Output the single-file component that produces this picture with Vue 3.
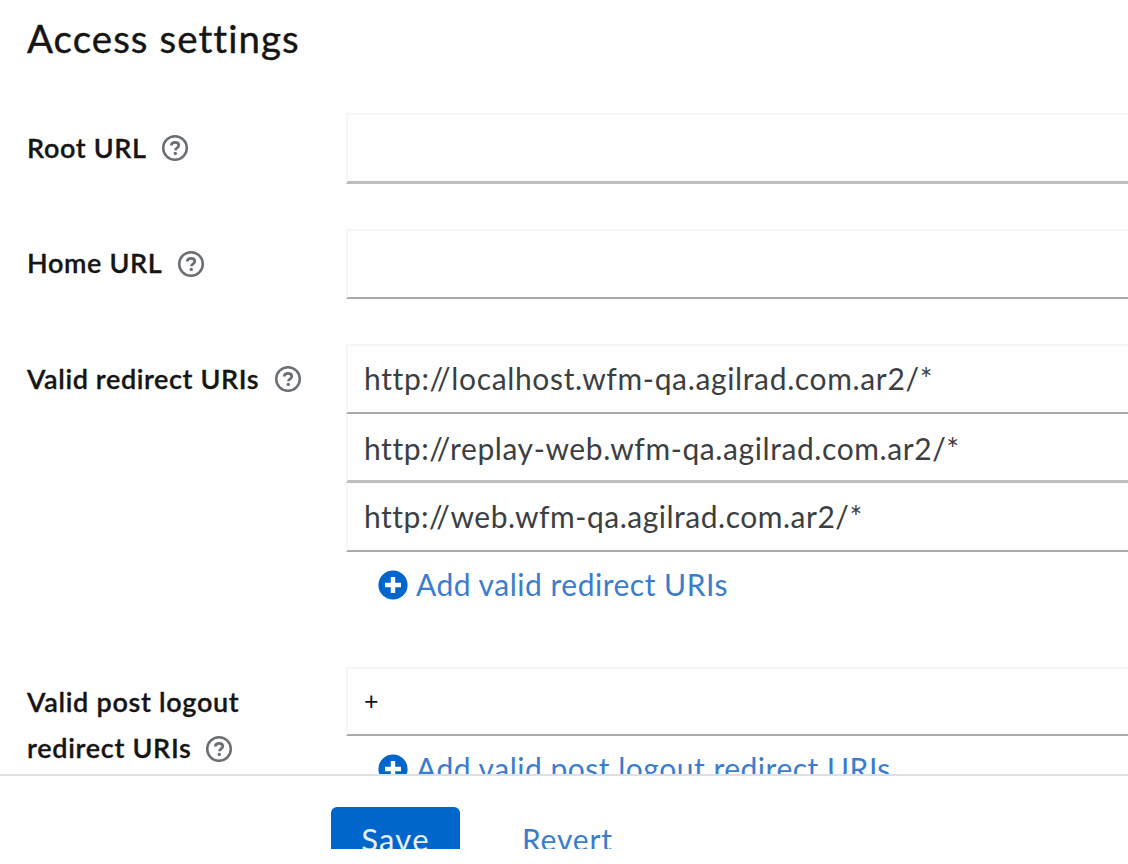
<script setup>
const fields = [
  { id: 'root', lines: ['Root URL'], values: [''] },
  { id: 'home', lines: ['Home URL'], values: [''] },
  {
    id: 'redirect',
    lines: ['Valid redirect URIs'],
    values: [
      'http://localhost.wfm-qa.agilrad.com.ar2/*',
      'http://replay-web.wfm-qa.agilrad.com.ar2/*',
      'http://web.wfm-qa.agilrad.com.ar2/*',
    ],
    add: 'Add valid redirect URIs',
  },
  {
    id: 'logout',
    lines: ['Valid post logout', 'redirect URIs'],
    values: ['+'],
    add: 'Add valid post logout redirect URIs',
  },
]
</script>

<template>
  <main class="page">
    <section class="form">
      <h1 class="title">Access settings</h1>
      <div v-for="f in fields" :key="f.id" class="field" :class="f.id">
        <div class="label">
          <div v-for="(line, i) in f.lines" :key="line" class="line">
            <span class="text">{{ line }}</span>
            <svg v-if="i === f.lines.length - 1" class="help" viewBox="0 0 28 28">
              <circle cx="14" cy="14" r="11.8" fill="none" stroke="#6a6e73" stroke-width="2.5" />
              <path d="M10.1 11.5C10.6 9.3 12 8.4 14 8.4c2.2 0 3.8 1.2 3.8 3.1 0 2.4-3.4 2.5-3.4 4.8" fill="none" stroke="#6a6e73" stroke-width="2.7" />
              <circle cx="14.3" cy="19.4" r="1.7" fill="#6a6e73" />
            </svg>
          </div>
        </div>
        <div class="control">
          <div v-for="(v, i) in f.values" :key="i" class="input" :class="'n' + i">{{ v }}</div>
          <div v-if="f.add" class="add">
            <svg class="plus" viewBox="0 0 30 30">
              <circle cx="15" cy="15" r="14.6" fill="#06c" />
              <path d="M15 7v16M7 15h16" stroke="#fff" stroke-width="4.4" />
            </svg>
            <span>{{ f.add }}</span>
          </div>
        </div>
      </div>
    </section>
    <footer class="actions">
      <div class="save">Save</div>
      <div class="revert">Revert</div>
    </footer>
  </main>
</template>

<style>
body { background: #fff; overflow: hidden; }
</style>

<style scoped>
.page {
  height: 849px;
  overflow: hidden;
  display: flex;
  flex-direction: column;
  font-family: Lato, "Open Sans", sans-serif;
  color: #151515;
  background: #fefefe;
}
.form {
  height: 774px;
  flex: none;
  overflow: hidden;
  box-sizing: border-box;
  padding-left: 27px;
}
.title {
  margin: 0;
  height: 113px;
  padding-top: 14px;
  box-sizing: border-box;
  font-size: 38.5px;
  font-weight: 400;
  line-height: 48px;
  letter-spacing: 1.05px;
  -webkit-text-stroke: 0.4px #151515;
}
.field {
  display: grid;
  grid-template-columns: 319px 1fr;
  height: 115.5px;
}
.field.redirect { height: 323px; }
.label {
  padding-top: 12px;
  font-size: 27px;
  font-weight: 600;
  letter-spacing: 0.65px;
  -webkit-text-stroke: 0.3px #151515;
}
.redirect .label { letter-spacing: 0.6px; }
.logout .label { letter-spacing: 0.7px; }
.line {
  display: flex;
  align-items: center;
  height: 46.5px;
  white-space: nowrap;
}
.text { padding-bottom: 2px; }
.help {
  width: 28px;
  height: 28px;
  margin-left: 14.5px;
  flex: none;
}
.logout .help { margin-left: 13.5px; }
.input {
  box-sizing: border-box;
  height: 69px;
  padding-left: 16px;
  border: solid #f5f5f5;
  border-width: 2px 0 2px 2px;
  border-bottom-color: #a9aaac;
  font-size: 30px;
  line-height: 65px;
  letter-spacing: 0.65px;
  color: #3c3f42;
  white-space: nowrap;
}
.root .input, .home .input { height: 70px; }
.root .input { border-bottom-width: 3px; border-bottom-color: #bcbdbf; height: 71px; }
.redirect .input.n0 { height: 70px; }
.redirect .input.n1 {
  height: 69px;
  border-bottom-width: 3px;
  border-bottom-color: #bcbdbf;
  letter-spacing: 0.59px;
  line-height: 64px;
}
.input.n1, .input.n2 { border-top-color: transparent; }
.input.n2 { letter-spacing: 0.52px; line-height: 63px; }
.logout .input { font-size: 25px; color: #151515; line-height: 62px; }
.add {
  display: flex;
  align-items: center;
  height: 66px;
  padding-left: 32px;
  font-size: 30px;
  letter-spacing: 0.51px;
  color: #3b7dcc;
  white-space: nowrap;
}
.add span { padding-bottom: 2px; }
.plus {
  width: 30px;
  height: 30px;
  margin-right: 8px;
}
.actions {
  flex: none;
  height: 75px;
  box-sizing: border-box;
  border-top: 2px solid #dedfe0;
  padding: 31px 0 0 331px;
  display: flex;
  font-size: 30px;
  line-height: 65px;
}
.save {
  width: 129px;
  height: 70px;
  border-radius: 6px;
  background: #06c;
  color: #e8f1fb;
  font-size: 31px;
  letter-spacing: 1.2px;
  text-align: center;
}
.revert {
  margin-left: 62px;
  color: #3b7dcc;
  letter-spacing: 0.8px;
}
</style>
